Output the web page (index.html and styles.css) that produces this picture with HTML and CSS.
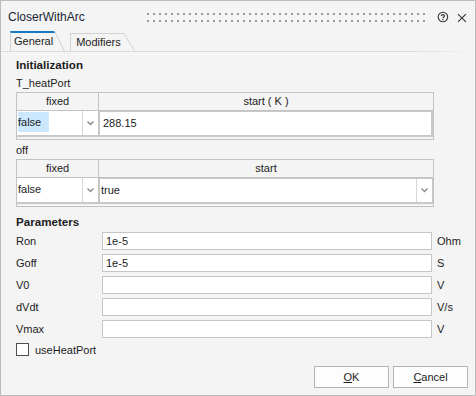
FILE: index.html
```html
<!DOCTYPE html>
<html lang="en">
<head>
    <meta charset="UTF-8">
    <title>CloserWithArc</title>
    <link rel="stylesheet" href="styles.css">
</head>
<body>
    <div class="window">
        <div class="titlebar">
            <span class="title">CloserWithArc</span>
            <svg class="grip" width="284" height="9">
                <defs>
                    <pattern id="dots" width="6" height="7" patternUnits="userSpaceOnUse">
                        <rect width="2" height="2" fill="#9a9a9a"/>
                    </pattern>
                </defs>
                <rect width="284" height="9" fill="url(#dots)"/>
            </svg>
            <svg class="help" width="12" height="12" viewBox="0 0 12 12">
                <circle cx="6" cy="6" r="4.8" fill="none" stroke="#333" stroke-width="1.1"/>
                <path d="M4.4 4.9 C4.4 3.2 7.6 3.2 7.6 4.9 C7.6 6.1 6 6 6 7.3" fill="none" stroke="#333" stroke-width="1.1"/>
                <rect x="5.4" y="8" width="1.2" height="1.2" fill="#333"/>
            </svg>
            <svg class="close" width="10" height="10" viewBox="0 0 10 10">
                <path d="M1 1 L9 9 M9 1 L1 9" stroke="#333" stroke-width="1.1"/>
            </svg>
        </div>

        <div class="tabs">
            <div class="tab active">General</div>
            <div class="tab">Modifiers</div>
        </div>

        <div class="pane">
            <div class="section">Initialization</div>
            <div class="label">T_heatPort</div>
            <div class="ptable">
                <div class="head">
                    <div class="hcell first">fixed</div>
                    <div class="hcell">start ( K )</div>
                </div>
                <div class="row">
                    <div class="combo first">
                        <span class="val"><span class="sel">false</span></span>
                        <span class="drop"><svg width="7" height="5"><path d="M0.5 0.5 L3.5 3.5 L6.5 0.5" fill="none" stroke="#8a8a8a" stroke-width="1.4"/></svg></span>
                    </div>
                    <div class="edit">288.15</div>
                </div>
            </div>

            <div class="label">off</div>
            <div class="ptable">
                <div class="head">
                    <div class="hcell first">fixed</div>
                    <div class="hcell">start</div>
                </div>
                <div class="row">
                    <div class="combo first">
                        <span class="val">false</span>
                        <span class="drop"><svg width="7" height="5"><path d="M0.5 0.5 L3.5 3.5 L6.5 0.5" fill="none" stroke="#8a8a8a" stroke-width="1.4"/></svg></span>
                    </div>
                    <div class="combo wide">
                        <span class="val">true</span>
                        <span class="drop"><svg width="7" height="5"><path d="M0.5 0.5 L3.5 3.5 L6.5 0.5" fill="none" stroke="#8a8a8a" stroke-width="1.4"/></svg></span>
                    </div>
                </div>
            </div>

            <div class="section params">Parameters</div>
            <div class="fields">
                <span>Ron</span><div class="input">1e-5</div><span class="unit">Ohm</span>
                <span>Goff</span><div class="input">1e-5</div><span class="unit">S</span>
                <span>V0</span><div class="input"></div><span class="unit">V</span>
                <span>dVdt</span><div class="input"></div><span class="unit">V/s</span>
                <span>Vmax</span><div class="input"></div><span class="unit">V</span>
            </div>

            <label class="check"><span class="box"></span>useHeatPort</label>
        </div>

        <div class="buttons">
            <button class="btn"><u>O</u>K</button>
            <button class="btn"><u>C</u>ancel</button>
        </div>
    </div>
</body>
</html>
```

FILE: styles.css
```css
body {
    margin: 0;
    padding: 0;
    font-family: "Liberation Sans", Arial, sans-serif;
    font-size: 11px;
    color: #1c1c1c;
}

.window {
    width: 476px;
    height: 396px;
    box-sizing: border-box;
    border: 1px solid #bcbcbc;
    background: #f4f4f4;
    display: flex;
    flex-direction: column;
}

/* title bar */
.titlebar {
    height: 30px;
    display: flex;
    align-items: center;
    padding: 0 8px 0 7px;
}

.title {
    color: #1a1f33;
    font-size: 12px;
    width: 141px;
    margin-top: 2px;
}

.grip {
    margin-top: 3px;
}

.help {
    margin-left: 9px;
    margin-top: 2px;
}

.close {
    margin-left: 8px;
    margin-top: 3px;
}

/* tabs */
.tabs {
    height: 20px;
    display: flex;
    align-items: flex-end;
    padding-left: 9px;
    border-bottom: 1px solid;
    border-image: linear-gradient(to right, #dadada 85%, rgba(218, 218, 218, 0)) 1;
}

.tab {
    position: relative;
    height: 17px;
    line-height: 17px;
    padding: 0 3px 0 5px;
    margin-right: 15px;
    border-left: 1px solid #d2d2d2;
    border-top: 1px solid #d2d2d2;
}

.tab::after {
    content: '';
    position: absolute;
    top: -1px;
    right: 0;
    width: 1px;
    height: 19px;
    background: #d2d2d2;
    transform: skewX(32deg);
    transform-origin: top left;
}

.tab.active {
    height: 18px;
    border-top: 2px solid #1979c3;
    padding-right: 2px;
    padding-left: 3px;
}

.tab.active::after {
    top: -2px;
    height: 21px;
    transform: skewX(26deg);
}

/* content */
.pane {
    padding: 5px 0 0 15px;
    flex: 1;
}

.section {
    font-weight: bold;
    font-size: 11.6px;
    line-height: 16px;
}

.params {
    margin-top: 7px;
}

.label {
    line-height: 16px;
    margin-top: 2px;
}

.ptable {
    width: 418px;
    box-sizing: border-box;
    border: 1px solid #c3c3c3;
    margin-top: 1px;
    height: 48px;
}

.head {
    display: flex;
    height: 17px;
    border-bottom: 1px solid #c3c3c3;
}

.hcell {
    flex: 1;
    text-align: center;
    line-height: 17px;
}

.hcell.first,
.combo.first {
    flex: none;
    width: 81px;
    border-right: 1px solid #c3c3c3;
}

.row {
    display: flex;
    height: 24px;
    background: #fff;
    border-bottom: 2px solid #c8c8c8;
}

.combo {
    display: flex;
    line-height: 23px;
}

.combo .val {
    flex: 1;
    padding-left: 1px;
    border-right: 1px solid #d6d6d6;
}

.sel {
    display: inline-block;
    background: #cce8ff;
    padding-right: 8px;
    line-height: 20px;
}

.combo .drop {
    width: 15px;
    display: flex;
    align-items: center;
    justify-content: center;
}

.combo.wide {
    flex: 1;
    border: 1px solid #c8c8c8;
    border-bottom: none;
}

.edit {
    flex: 1;
    border: 1px solid #c8c8c8;
    border-width: 1px 2px 0 1px;
    padding-left: 3px;
    line-height: 22px;
}

.fields {
    margin-top: 2px;
    display: grid;
    grid-template-columns: 86px 330px auto;
    row-gap: 4px;
    align-items: center;
}

.input {
    height: 18px;
    box-sizing: border-box;
    border: 1px solid #c6c6c6;
    background: #fff;
    line-height: 16px;
    padding-left: 3px;
}

.unit {
    padding-left: 5px;
}

.check {
    display: flex;
    align-items: center;
    margin-top: 5px;
}

.box {
    width: 13px;
    height: 13px;
    box-sizing: border-box;
    border: 1px solid #4d4d4d;
    background: #fff;
    margin-right: 6px;
}

.buttons {
    display: flex;
    justify-content: flex-end;
    gap: 4px;
    padding: 0 7px 7px 0;
}

.btn {
    width: 75px;
    height: 22px;
    font-family: inherit;
    font-size: 11px;
    color: #1c1c1c;
    background: #fdfdfd;
    border: 1px solid #b4b4b4;
    padding: 0;
}
```
